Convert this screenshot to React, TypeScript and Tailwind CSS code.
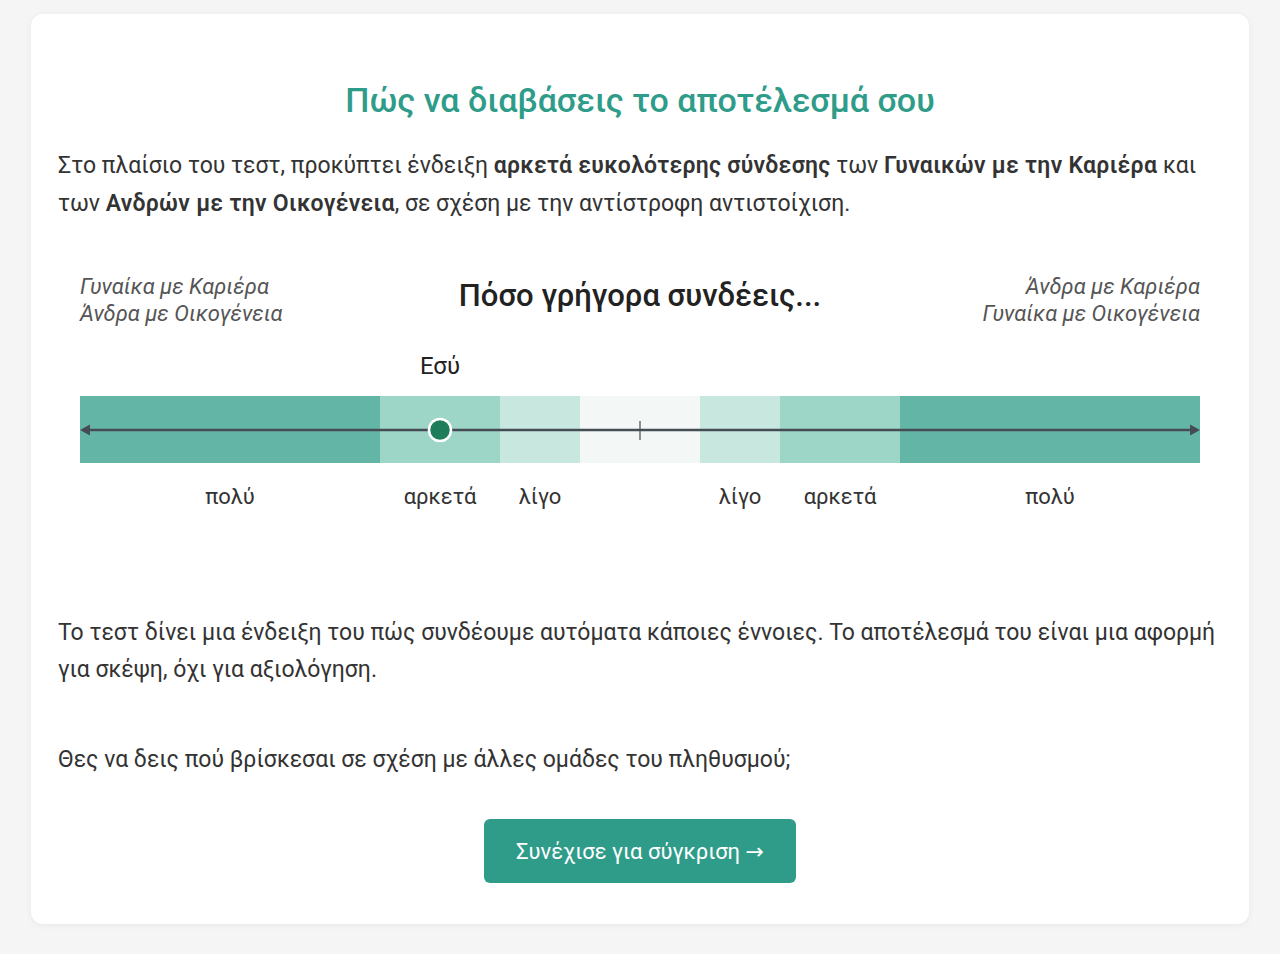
import React from "react";

const segments = [
  { w: 300, c: "bg-[#63b6a5]" },
  { w: 120, c: "bg-[#9dd5c6]" },
  { w: 80, c: "bg-[#c8e8df]" },
  { w: 120, c: "bg-[#f3f8f6]" },
  { w: 80, c: "bg-[#c8e8df]" },
  { w: 120, c: "bg-[#9dd5c6]" },
  { w: 300, c: "bg-[#63b6a5]" },
];

const labels = [
  { w: 300, t: "πολύ" },
  { w: 120, t: "αρκετά" },
  { w: 80, t: "λίγο" },
  { w: 120, t: "" },
  { w: 80, t: "λίγο" },
  { w: 120, t: "αρκετά" },
  { w: 300, t: "πολύ" },
];

function Scale() {
  return (
    <div className="mx-auto w-[1120px]">
      <div className="flex h-[40px] items-end">
        <div className="w-[300px]" />
        <div className="w-[120px] text-center text-[24px] font-normal leading-[30px] text-[#222]">Εσύ</div>
      </div>
      <div className="relative mt-[15px] flex h-[67px]">
        {segments.map((s, i) => (
          <div key={i} className={s.c} style={{ width: s.w }} />
        ))}
        <svg className="absolute inset-0" width="1120" height="67" viewBox="0 0 1120 67">
          <line x1="4" y1="34" x2="1116" y2="34" stroke="#454c55" strokeWidth="2.5" />
          <polygon points="0,34 10,28.5 10,39.5" fill="#454c55" />
          <polygon points="1120,34 1110,28.5 1110,39.5" fill="#454c55" />
          <line x1="560" y1="25" x2="560" y2="44" stroke="#454c55" strokeWidth="1.2" />
          <circle cx="360" cy="34" r="11" fill="#1e7d5a" stroke="#ffffff" strokeWidth="2.5" />
        </svg>
      </div>
      <div className="mt-[20px] flex">
        {labels.map((l, i) => (
          <div key={i} className="text-center text-[22px] leading-[28px] text-[#333]" style={{ width: l.w }}>
            {l.t}
          </div>
        ))}
      </div>
    </div>
  );
}

export default function App() {
  return (
    <div className="min-h-[954px] bg-[#f5f5f5] pt-[14px] pb-[30px] font-['Roboto',sans-serif]">
      <div className="mx-[31px] rounded-[12px] bg-white px-[27px] pt-[66px] pb-[41px] shadow-[0_1px_6px_rgba(0,0,0,0.06)]">
        <h1 className="text-center text-[34px] font-medium leading-[40px] text-[#2f9c8a]">
          Πώς να διαβάσεις το αποτέλεσμά σου
        </h1>
        <p className="mt-[27px] text-[23px] leading-[38px] text-[#333]">
          Στο πλαίσιο του τεστ, προκύπτει ένδειξη{" "}
          <b className="font-semibold tracking-[0.3px]">αρκετά ευκολότερης σύνδεσης</b> των{" "}
          <b className="font-semibold tracking-[0.3px]">Γυναικών με την Καριέρα</b> και των{" "}
          <b className="font-semibold tracking-[0.3px]">Ανδρών με την Οικογένεια</b>, σε σχέση με την αντίστροφη
          αντιστοίχιση.
        </p>

        <div className="mx-auto mt-[50px] flex w-[1120px] items-start justify-between">
          <div className="w-[300px] text-[22px] italic leading-[27px] text-[#555]">
            <div>Γυναίκα με Καριέρα</div>
            <div>Άνδρα με Οικογένεια</div>
          </div>
          <div className="pt-[5px] text-center text-[31px] font-medium leading-[36px] text-[#222]">
            Πόσο γρήγορα συνδέεις...
          </div>
          <div className="w-[300px] text-right text-[22px] italic leading-[27px] text-[#555]">
            <div>Άνδρα με Καριέρα</div>
            <div>Γυναίκα με Οικογένεια</div>
          </div>
        </div>

        <div className="mt-[14px]">
          <Scale />
        </div>

        <p className="mt-[103px] text-[23px] leading-[37px] text-[#333]">
          Το τεστ δίνει μια ένδειξη του πώς συνδέουμε αυτόματα κάποιες έννοιες. Το αποτέλεσμά του είναι μια αφορμή
          για σκέψη, όχι για αξιολόγηση.
        </p>
        <p className="mt-[53px] text-[23px] leading-[37px] text-[#333]">
          Θες να δεις πού βρίσκεσαι σε σχέση με άλλες ομάδες του πληθυσμού;
        </p>
        <div className="mt-[41px] flex justify-center">
          <button className="h-[64px] w-[312px] rounded-[6px] bg-[#2e9c89] text-[22px] text-white">
            Συνέχισε για σύγκριση <span className="font-['DejaVu_Sans',sans-serif]">→</span>
          </button>
        </div>
      </div>
    </div>
  );
}
